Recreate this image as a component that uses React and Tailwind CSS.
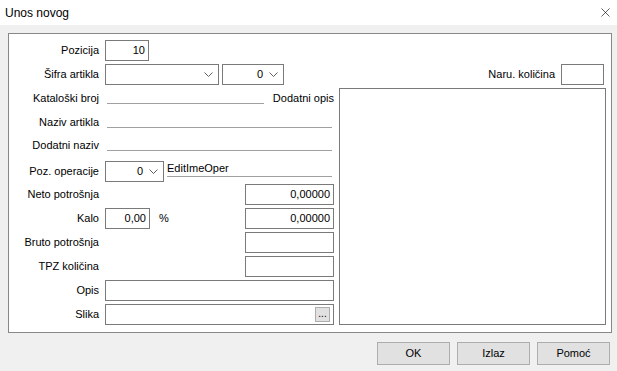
import { X } from 'lucide-react';

function Chevron() {
  return (
    <svg width="9" height="5" viewBox="0 0 9 5" className="shrink-0">
      <path d="M0.5 0.5 L4.5 4.5 L8.5 0.5" fill="none" stroke="#606060" strokeWidth="1" />
    </svg>
  );
}

function Label({ children, className = '' }) {
  return <div className={`w-[91px] shrink-0 pr-[1px] text-right ${className}`}>{children}</div>;
}

function Box({ className = '', children }) {
  return (
    <div className={`flex h-[21px] items-center justify-end border border-[#7a7a7a] bg-white pr-[3px] ${className}`}>
      {children}
    </div>
  );
}

function Combo({ className = '', value }) {
  return (
    <div className={`flex h-[21px] items-center justify-end gap-[6px] border border-[#7a7a7a] bg-white pr-[5px] ${className}`}>
      {value !== undefined && <span>{value}</span>}
      <Chevron />
    </div>
  );
}

function Underline({ className = '', children }) {
  return <div className={`h-[16px] border-b border-[#a0a0a0] leading-[14px] ${className}`}>{children}</div>;
}

export default function App() {
  return (
    <div
      className="flex h-[371px] w-[617px] flex-col bg-[#f0f0f0] text-[11px] text-black"
      style={{ fontFamily: '"Liberation Sans", Arial, sans-serif' }}
    >
      <div className="flex h-[25px] items-center justify-between bg-white pl-[5px] pr-[4px]">
        <span className="text-[12px]">Unos novog</span>
        <X className="h-[15px] w-[15px]" strokeWidth={1} />
      </div>

      <div className="ml-[8px] mt-[8px] flex h-[300px] w-[604px] flex-col border border-[#888888] bg-white pt-[6px]">
        <div className="flex h-[21px] items-center">
          <Label>Pozicija</Label>
          <Box className="ml-[5px] w-[44px]">10</Box>
        </div>

        <div className="mt-[3px] flex h-[21px] items-center pr-[7px]">
          <Label>Šifra artikla</Label>
          <Combo className="ml-[5px] w-[114px]" />
          <Combo className="ml-[3px] w-[62px]" value="0" />
          <span className="ml-auto">Naru. količina</span>
          <Box className="ml-[6px] w-[43px]" />
        </div>

        <div className="mt-[3px] flex">
          <div className="flex w-[325px] shrink-0 flex-col">
            <div className="flex h-[16px] items-end">
              <Label className="leading-[12px]">Kataloški broj</Label>
              <Underline className="ml-[7px] w-[157px]" />
              <span className="ml-auto leading-[12px]">Dodatni opis</span>
            </div>
            <div className="mt-[8px] flex h-[16px] items-end">
              <Label className="leading-[12px]">Naziv artikla</Label>
              <Underline className="ml-[7px] w-[225px]" />
            </div>
            <div className="mt-[7px] flex h-[16px] items-end">
              <Label className="leading-[12px]">Dodatni naziv</Label>
              <Underline className="ml-[7px] w-[225px]" />
            </div>
            <div className="mt-[10px] flex h-[21px] items-center">
              <Label>Poz. operacije</Label>
              <Combo className="ml-[5px] w-[59px]" value="0" />
              <Underline className="ml-[3px] mb-[6px] w-[165px] self-start leading-[13px]">EditImeOper</Underline>
            </div>
            <div className="mt-[2px] flex h-[21px] items-center">
              <Label>Neto potrošnja</Label>
              <Box className="ml-auto w-[89px]">0,00000</Box>
            </div>
            <div className="mt-[3px] flex h-[21px] items-center">
              <Label>Kalo</Label>
              <Box className="ml-[5px] w-[45px]">0,00</Box>
              <span className="ml-[9px]">%</span>
              <Box className="ml-auto w-[89px]">0,00000</Box>
            </div>
            <div className="mt-[3px] flex h-[21px] items-center">
              <Label>Bruto potrošnja</Label>
              <Box className="ml-auto w-[89px]" />
            </div>
            <div className="mt-[3px] flex h-[21px] items-center">
              <Label>TPZ količina</Label>
              <Box className="ml-auto w-[89px]" />
            </div>
            <div className="mt-[3px] flex h-[21px] items-center">
              <Label>Opis</Label>
              <Box className="ml-[5px] w-[229px]" />
            </div>
            <div className="mt-[3px] flex h-[21px] items-center">
              <Label>Slika</Label>
              <Box className="ml-[5px] w-[229px] pr-[2px]">
                <div className="flex h-[15px] w-[15px] items-center justify-center border border-[#adadad] bg-[#e1e1e1] pb-[3px] text-[10px]">
                  ...
                </div>
              </Box>
            </div>
          </div>
          <div className="ml-[5px] h-[237px] w-[267px] border border-[#7a7a7a] bg-white" />
        </div>
      </div>

      <div className="mt-[9px] flex justify-end gap-[7px] pr-[7px]">
        {['OK', 'Izlaz', 'Pomoć'].map((t) => (
          <div
            key={t}
            className="flex h-[23px] w-[73px] items-center justify-center border border-[#adadad] bg-[#e1e1e1]"
          >
            {t}
          </div>
        ))}
      </div>
    </div>
  );
}
